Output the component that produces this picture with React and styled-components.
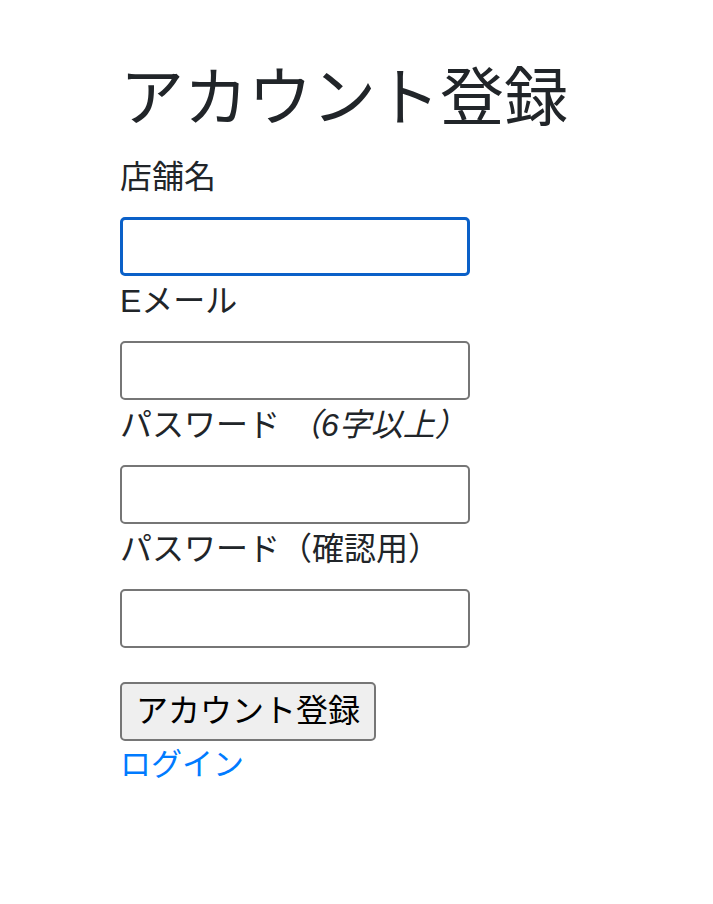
import React from 'react';
import styled, { createGlobalStyle } from 'styled-components';

const GlobalStyle = createGlobalStyle`
	body {
		margin: 0;
		background: #fff;
		color: #212529;
		font-family: 'Liberation Sans', 'Noto Sans CJK JP', sans-serif;
	}
`;

const Page = styled.div`
	padding: 60px 0 0 120px;
`;

const Title = styled.h2`
	margin: 0 0 16px;
	font-size: 64px;
	font-weight: 400;
	line-height: 1.2;
`;

const Field = styled.div`
	display: flex;
	flex-direction: column;
	align-items: flex-start;
`;

const Label = styled.label`
	display: block;
	margin-bottom: 16px;
	font-size: 32px;
	line-height: 48px;
`;

const Note = styled.i`
	font-style: italic;
`;

const InputRow = styled.div`
	height: 60px;
`;

const Input = styled.input`
	box-sizing: border-box;
	width: 350px;
	height: 59px;
	padding: 0 8px;
	border: ${(p) => (p.$focused ? '3px solid #0a60c8' : '2px solid #767676')};
	border-radius: 5px;
	background: #fff;
	font-size: 28px;
	outline: none;
`;

const Actions = styled.div`
	margin-top: 33px;
	display: flex;
	flex-direction: column;
	align-items: flex-start;
`;

const Submit = styled.button`
	box-sizing: border-box;
	height: 59px;
	padding: 4px 14px;
	border: 2px solid #767676;
	border-radius: 5px;
	background: #efefef;
	color: #000;
	font-family: 'Liberation Sans', 'Noto Sans CJK JP', sans-serif;
	font-size: 32px;
	line-height: 46px;
`;

const LoginLink = styled.a`
	font-size: 31px;
	line-height: 47px;
	color: #007bff;
	text-decoration: none;
`;

const fields = [
	{ id: 'name', label: '店舗名', type: 'text', focused: true },
	{ id: 'email', label: 'Eメール', type: 'email' },
	{ id: 'password', label: 'パスワード', note: ' （6字以上）', type: 'password' },
	{ id: 'password_confirmation', label: 'パスワード（確認用）', type: 'password' }
];

const App = () => {
	return (
		<Page>
			<GlobalStyle />
			<Title>アカウント登録</Title>
			{fields.map((f) => (
				<Field key={f.id}>
					<Label htmlFor={f.id}>
						{f.label}
						{f.note && <Note>{f.note}</Note>}
					</Label>
					<InputRow>
						<Input id={f.id} type={f.type} $focused={f.focused} />
					</InputRow>
				</Field>
			))}
			<Actions>
				<Submit type='submit'>アカウント登録</Submit>
				<LoginLink href='#'>ログイン</LoginLink>
			</Actions>
		</Page>
	);
};

export default App;
